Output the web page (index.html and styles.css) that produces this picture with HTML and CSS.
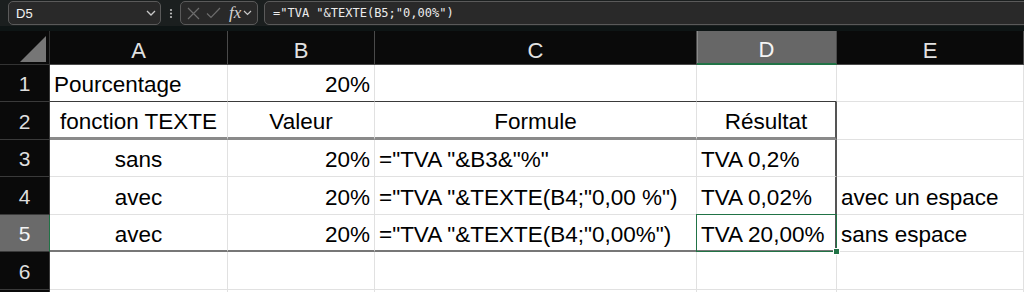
FILE: index.html
```html
<!DOCTYPE html>
<html lang="fr">
<head>
<meta charset="UTF-8" />
<title>TVA - fonction TEXTE</title>
<link rel="stylesheet" href="styles.css">
</head>
<body>

<div class="topbar">
  <div class="box namebox">
    <span>D5</span>
    <svg class="chev" width="10" height="6" viewBox="0 0 10 6"><polyline points="1,1 5,5 9,1" fill="none" stroke="#c8c8c8" stroke-width="1.3"/></svg>
  </div>
  <svg class="dots" width="19" height="24" viewBox="0 0 19 24">
    <circle cx="10" cy="9" r="1.1" fill="#bdbdbd"/>
    <circle cx="10" cy="12.5" r="1.1" fill="#bdbdbd"/>
    <circle cx="10" cy="16" r="1.1" fill="#bdbdbd"/>
  </svg>
  <div class="box fxbox">
    <svg width="13" height="13" viewBox="0 0 13 13"><path d="M1 1 L12 12 M12 1 L1 12" stroke="#6c6c6c" stroke-width="1.2"/></svg>
    <svg width="15" height="12" viewBox="0 0 15 12"><polyline points="1,6.5 5,10.5 14,1" fill="none" stroke="#6c6c6c" stroke-width="1.2"/></svg>
    <span class="fx">fx</span>
    <svg width="9" height="6" viewBox="0 0 9 6"><polyline points="1,1 4.5,4.5 8,1" fill="none" stroke="#c8c8c8" stroke-width="1.2"/></svg>
  </div>
  <div class="box formula">="TVA "&amp;TEXTE(B5;"0,00%")</div>
</div>

<div class="sheet">
  <div class="corner">
    <svg width="50" height="34" viewBox="0 0 50 34"><polygon points="20,31 46,5 46,31" fill="#767676"/></svg>
  </div>
  <div class="colhead">A</div>
  <div class="colhead">B</div>
  <div class="colhead">C</div>
  <div class="colhead sel">D</div>
  <div class="colhead">E</div>

  <!-- row 1 -->
  <div class="rowhead">1</div>
  <div class="cell edge-b">Pourcentage</div>
  <div class="cell r edge-b">20%</div>
  <div class="cell edge-b"></div>
  <div class="cell edge-b"></div>
  <div class="cell"></div>

  <!-- row 2 -->
  <div class="rowhead">2</div>
  <div class="cell c head-b">fonction TEXTE</div>
  <div class="cell c head-b">Valeur</div>
  <div class="cell c head-b">Formule</div>
  <div class="cell c head-b edge-r">Résultat</div>
  <div class="cell"></div>

  <!-- row 3 -->
  <div class="rowhead">3</div>
  <div class="cell c">sans</div>
  <div class="cell r">20%</div>
  <div class="cell">="TVA "&amp;B3&amp;"%"</div>
  <div class="cell edge-r">TVA 0,2%</div>
  <div class="cell"></div>

  <!-- row 4 -->
  <div class="rowhead">4</div>
  <div class="cell c">avec</div>
  <div class="cell r">20%</div>
  <div class="cell">="TVA "&amp;TEXTE(B4;"0,00 %")</div>
  <div class="cell edge-r">TVA 0,02%</div>
  <div class="cell">avec un espace</div>

  <!-- row 5 -->
  <div class="rowhead sel">5</div>
  <div class="cell c end-b">avec</div>
  <div class="cell r end-b">20%</div>
  <div class="cell end-b">="TVA "&amp;TEXTE(B4;"0,00%")</div>
  <div class="cell end-b edge-r active">TVA 20,00%</div>
  <div class="cell">sans espace</div>

  <!-- row 6 -->
  <div class="rowhead">6</div>
  <div class="cell"></div>
  <div class="cell"></div>
  <div class="cell"></div>
  <div class="cell"></div>
  <div class="cell"></div>

  <!-- top of row 7, only 2px visible -->
  <div class="rowhead stub"></div>
  <div class="cell stub"></div>
  <div class="cell stub"></div>
  <div class="cell stub"></div>
  <div class="cell stub"></div>
  <div class="cell stub"></div>
</div>

</body>
</html>
```

FILE: styles.css
```css
body {
  margin: 0;
  width: 1024px;
  height: 292px;
  overflow: hidden;
  background: #0a0a0a;
  font-family: 'Liberation Sans', Arial, sans-serif;
}

/* formula bar */
.topbar {
  display: flex;
  align-items: center;
  height: 26px;
  padding-left: 8px;
  background: #1b1f1f;
  border-bottom: 5px solid #0e1515;
  overflow: hidden;
}

.box {
  box-sizing: border-box;
  height: 24px;
  border: 1px solid #5a5a5a;
  border-radius: 5px;
  background: #292929;
  display: flex;
  align-items: center;
}

.namebox {
  width: 153px;
  padding: 0 4px 0 7px;
  justify-content: space-between;
  color: #f2f2f2;
  font-size: 13px;
}

.fxbox {
  width: 78px;
  padding-left: 6px;
  gap: 6px;
}

.fx {
  font-family: 'Liberation Serif', 'DejaVu Serif', serif;
  font-style: italic;
  font-size: 17px;
  color: #d2d2d2;
  margin-left: 2px;
  margin-right: -4px;
}

.formula {
  flex: 1;
  margin-left: 6px;
  margin-right: -10px;
  padding-left: 8px;
  font-family: 'DejaVu Sans Mono', 'Liberation Mono', monospace;
  font-size: 12px;
  color: #ececec;
}

/* grid */
.sheet {
  display: grid;
  grid-template-columns: 50px 178px 147px 322px 140px 187px;
  grid-template-rows: 34px 37px 38px 37px 38px 37px 38px 2px;
}

.corner {
  background: #0a0a0a;
  border-right: 1px solid #333;
  border-bottom: 1px solid #333;
  box-sizing: border-box;
}

.corner svg {
  display: block;
}

.colhead {
  box-sizing: border-box;
  display: flex;
  justify-content: center;
  align-items: center;
  padding-top: 6px;
  background: #0a0a0a;
  color: #e2e2e2;
  font-size: 22px;
  border-right: 1px solid #4a4a4a;
  border-bottom: 1px solid #4a4a4a;
}

.colhead.sel {
  background: #676767;
  color: #f4f4f4;
  border-bottom: 2px solid #217346;
  box-shadow: inset 1px 0 #8a8a8a;
}

.rowhead {
  box-sizing: border-box;
  display: flex;
  justify-content: center;
  align-items: center;
  padding-top: 2px;
  background: #0a0a0a;
  color: #dedede;
  font-size: 21px;
  border-right: 1px solid #3a3a3a;
  border-bottom: 1px solid #3a3a3a;
}

.rowhead.sel {
  background: #6a6a6a;
  color: #f4f4f4;
  border-right: 1px solid #217346;
}

.cell {
  box-sizing: border-box;
  display: flex;
  align-items: center;
  padding: 4px 4px 0;
  background: #fff;
  color: #000;
  font-size: 22.5px;
  white-space: nowrap;
  border-right: 1px solid #e1e1e1;
  border-bottom: 1px solid #e1e1e1;
}

.cell.c {
  justify-content: center;
}

.cell.r {
  justify-content: flex-end;
}

.stub {
  padding: 0;
  border-bottom: none;
}

/* table outline A2:D5 */
.edge-b {
  border-bottom: 1px solid #3a3a3a;
}

.head-b {
  border-bottom: 3px solid #8a8a8a;
}

.end-b {
  border-bottom: 2px solid #777;
}

.edge-r {
  border-right: 2px solid #555;
}

/* selected cell D5 */
.active {
  position: relative;
}

.active::before {
  content: '';
  position: absolute;
  top: -1px;
  left: -1px;
  right: -2px;
  bottom: -2px;
  border: 1.5px solid #217346;
}

.active::after {
  content: '';
  position: absolute;
  right: -5px;
  bottom: -5px;
  width: 5px;
  height: 5px;
  background: #217346;
  border: 1px solid #fff;
}
```
